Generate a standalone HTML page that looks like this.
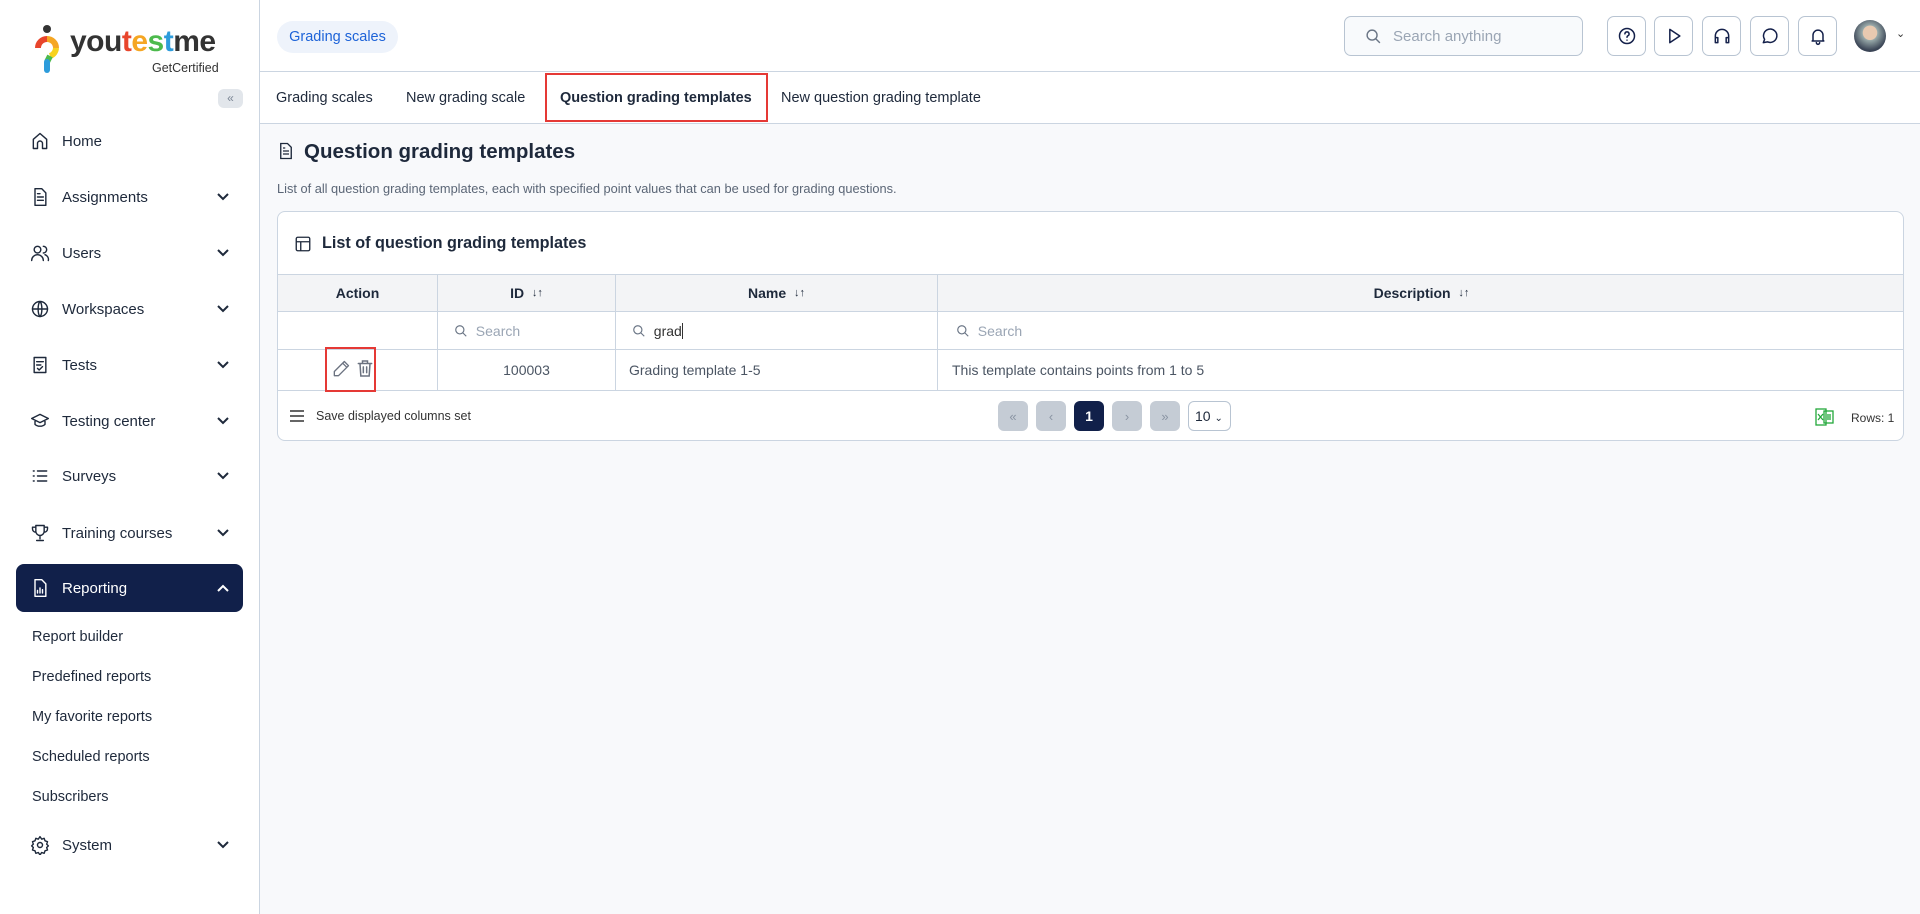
<!DOCTYPE html>
<html><head><meta charset="utf-8"><style>
*{box-sizing:border-box;margin:0;padding:0}
body{width:1920px;height:914px;overflow:hidden;font-family:"Liberation Sans",sans-serif;color:#1e293b;background:#f8f9fb;position:relative}
.abs{position:absolute}
#side{left:0;top:0;width:260px;height:914px;background:#fff;border-right:1px solid #cbd5e1}
.nav{position:absolute;left:30px;width:210px;height:24px;font-size:15px;font-weight:500;color:#1e293b;display:flex;align-items:center}
.nav svg.i{width:20px;height:20px;margin-right:12px;stroke:#1e293b;fill:none;stroke-width:1.7;stroke-linecap:round;stroke-linejoin:round}
.chev{position:absolute;right:10px;top:5px;width:14px;height:14px;stroke:#1e293b;fill:none;stroke-width:2}
.sub{position:absolute;left:32px;font-size:14.5px;font-weight:500;color:#1e293b}
#top{left:260px;top:0;width:1660px;height:72px;background:#fff;border-bottom:1px solid #cbd5e1}
#tabs{left:260px;top:72px;width:1660px;height:52px;background:#fff;border-bottom:1px solid #cbd5e1}
.tab{position:absolute;top:18px;font-size:14.5px;color:#1e293b}
.ib{position:absolute;top:16px;width:39px;height:40px;border:1px solid #b8c4d2;border-radius:7px;display:flex;align-items:center;justify-content:center;background:#fff}
.ib svg{width:20px;height:20px;stroke:#14204a;fill:none;stroke-width:1.8;stroke-linecap:round;stroke-linejoin:round}
#card{left:277px;top:211px;width:1627px;height:230px;background:#fff;border:1px solid #cbd5e1;border-radius:8px;overflow:hidden}
.row{position:absolute;left:0;width:1627px;border-top:1px solid #cbd5e1}
.cell{position:absolute;top:0;height:100%;border-right:1px solid #cbd5e1;display:flex;align-items:center;font-size:14px}
.pb{position:absolute;top:189px;width:30px;height:30px;border-radius:6px;background:#c5ccd5;color:#8a94a3;font-size:13px;display:flex;align-items:center;justify-content:center}
</style></head><body>
<div id="side" class="abs">
  <svg class="abs" style="left:32px;top:24px" width="30" height="50" viewBox="0 0 30 50">
    <circle cx="15" cy="5" r="4" fill="#333"/>
    <path d="M6 24a9 9 0 0 1 9-9" stroke="#e8452c" stroke-width="6" fill="none"/>
    <path d="M15 15a9 9 0 0 1 9 9" stroke="#f5a623" stroke-width="6" fill="none"/>
    <path d="M24 24a9 9 0 0 1-6 8" stroke="#f7d21d" stroke-width="6" fill="none"/>
    <path d="M18 32l-3 6" stroke="#4cba4c" stroke-width="6" fill="none"/>
    <path d="M15 38v8" stroke="#2d9cdb" stroke-width="6" stroke-linecap="round"/>
  </svg>
  <div class="abs" style="left:70px;top:27px;font-size:30px;font-weight:bold;letter-spacing:-0.5px;color:#333;line-height:1">you<span style="color:#e8452c">t</span><span style="color:#f5a623">e</span><span style="color:#4cba4c">s</span><span style="color:#2d9cdb">t</span>me</div>
  <div class="abs" style="left:152px;top:61px;font-size:12.5px;color:#333">GetCertified</div>
  <div class="abs" style="left:218px;top:89px;width:25px;height:19px;border-radius:6px;background:#e2e6eb;color:#7a8594;font-size:12px;text-align:center;line-height:19px">«</div>
  <div class="nav" style="top:129px"><svg class="i" viewBox="0 0 24 24"><path d="M4 21V10l8-7 8 7v11h-5v-6a3 3 0 0 0-6 0v6z"/></svg>Home</div>
  <div class="nav" style="top:185px"><svg class="i" viewBox="0 0 24 24"><path d="M6 2h8l5 5v15H6z M9 12h7M9 16h7M9 8h3"/></svg>Assignments<svg class="chev" viewBox="0 0 14 14"><path d="M2 4l5 5 5-5"/></svg></div>
  <div class="nav" style="top:241px"><svg class="i" viewBox="0 0 24 24"><circle cx="9" cy="8" r="4"/><path d="M2 21a7 7 0 0 1 14 0M16 4a4 4 0 0 1 0 8M18 14a6 6 0 0 1 4 7"/></svg>Users<svg class="chev" viewBox="0 0 14 14"><path d="M2 4l5 5 5-5"/></svg></div>
  <div class="nav" style="top:297px"><svg class="i" viewBox="0 0 24 24"><circle cx="12" cy="12" r="9"/><path d="M3 12h18M12 3c3 3 3 15 0 18M12 3c-3 3-3 15 0 18"/></svg>Workspaces<svg class="chev" viewBox="0 0 14 14"><path d="M2 4l5 5 5-5"/></svg></div>
  <div class="nav" style="top:353px"><svg class="i" viewBox="0 0 24 24"><path d="M5 3h14v18H5z M8 8h8M8 12h5M9 16l2 2 4-4"/></svg>Tests<svg class="chev" viewBox="0 0 14 14"><path d="M2 4l5 5 5-5"/></svg></div>
  <div class="nav" style="top:409px"><svg class="i" viewBox="0 0 24 24"><path d="M2 9l10-5 10 5-10 5z M6 11v5c3 3 9 3 12 0v-5"/></svg>Testing center<svg class="chev" viewBox="0 0 14 14"><path d="M2 4l5 5 5-5"/></svg></div>
  <div class="nav" style="top:464px"><svg class="i" viewBox="0 0 24 24"><path d="M4 6h1M4 12h1M4 18h1M9 6h11M9 12h11M9 18h11"/></svg>Surveys<svg class="chev" viewBox="0 0 14 14"><path d="M2 4l5 5 5-5"/></svg></div>
  <div class="nav" style="top:521px"><svg class="i" viewBox="0 0 24 24"><path d="M7 3h10v7a5 5 0 0 1-10 0z M7 5H3v2a4 4 0 0 0 4 4M17 5h4v2a4 4 0 0 1-4 4M12 15v4M8 21h8"/></svg>Training courses<svg class="chev" viewBox="0 0 14 14"><path d="M2 4l5 5 5-5"/></svg></div>
  <div class="abs" style="left:16px;top:564px;width:227px;height:48px;border-radius:8px;background:#11204a"></div>
  <div class="nav" style="top:576px;color:#fff"><svg class="i" viewBox="0 0 24 24" style="stroke:#fff"><path d="M6 2h8l5 5v15H6z M9 18v-3M12 18v-6M15 18v-4"/></svg>Reporting<svg class="chev" viewBox="0 0 14 14" style="stroke:#fff"><path d="M2 10l5-5 5 5"/></svg></div>
  <div class="sub" style="top:629px">Report builder</div>
  <div class="sub" style="top:669px">Predefined reports</div>
  <div class="sub" style="top:709px">My favorite reports</div>
  <div class="sub" style="top:749px">Scheduled reports</div>
  <div class="sub" style="top:789px">Subscribers</div>
  <div class="nav" style="top:833px"><svg class="i" viewBox="0 0 24 24"><circle cx="12" cy="12" r="3"/><path d="M12 2l2 3 3-1 1 3 3 1-1 3 2 2-2 2 1 3-3 1-1 3-3-1-2 3-2-3-3 1-1-3-3-1 1-3-2-2 2-2-1-3 3-1 1-3 3 1z"/></svg>System<svg class="chev" viewBox="0 0 14 14"><path d="M2 4l5 5 5-5"/></svg></div>
</div>

<div id="top" class="abs">
  <div class="abs" style="left:17px;top:21px;width:121px;height:32px;border-radius:16px;background:#eef3fb;color:#1d63d8;font-size:14.5px;line-height:32px;text-align:center">Grading scales</div>
  <div class="abs" style="left:1084px;top:16px;width:239px;height:40px;border:1px solid #b8c4d2;border-radius:7px;background:#f8fafc">
    <svg class="abs" style="left:20px;top:11px" width="17" height="17" viewBox="0 0 24 24" fill="none" stroke="#6b7686" stroke-width="2"><circle cx="10" cy="10" r="7"/><path d="M15 15l6 6"/></svg>
    <div class="abs" style="left:48px;top:11px;font-size:15px;color:#9aa5b4">Search anything</div>
  </div>
  <div class="ib" style="left:1347px"><svg viewBox="0 0 24 24"><circle cx="12" cy="12" r="9"/><path d="M9.5 9.5a2.5 2.5 0 1 1 3.5 2.3c-.7.4-1 .9-1 1.7M12 17h.01"/></svg></div>
  <div class="ib" style="left:1394px"><svg viewBox="0 0 24 24"><path d="M7 4l12 8-12 8z"/></svg></div>
  <div class="ib" style="left:1442px"><svg viewBox="0 0 24 24"><path d="M4 18v-6a8 8 0 0 1 16 0v6M4 14h3v6H4zM17 14h3v6h-3z"/></svg></div>
  <div class="ib" style="left:1490px"><svg viewBox="0 0 24 24"><path d="M4 20l1.5-4A8 8 0 1 1 9 19z"/></svg></div>
  <div class="ib" style="left:1538px"><svg viewBox="0 0 24 24"><path d="M6 17V11a6 6 0 0 1 12 0v6l1 1H5zM10 20a2 2 0 0 0 4 0"/></svg></div>
  <div class="abs" style="left:1594px;top:20px;width:32px;height:32px;border-radius:50%;background:radial-gradient(circle at 50% 40%,#e8c9b0 0 28%,#9aa 30%,#3b4556 70%)"></div>
  <div class="abs" style="left:1636px;top:27px;font-size:11px;color:#333">⌄</div>
</div>

<div id="tabs" class="abs">
  <div class="tab" style="left:16px">Grading scales</div>
  <div class="tab" style="left:146px">New grading scale</div>
  <div class="abs" style="left:285px;top:1px;width:223px;height:49px;border:2px solid #e53935"></div>
  <div class="tab" style="left:300px;font-weight:bold">Question grading templates</div>
  <div class="tab" style="left:521px">New question grading template</div>
</div>

<svg class="abs" style="left:277px;top:141px" width="18" height="20" viewBox="0 0 24 24" fill="none" stroke="#1e293b" stroke-width="1.8"><path d="M5 2h9l5 5v15H5z M8 12h8M8 16h8M8 8h3"/></svg>
<div class="abs" style="left:304px;top:140px;font-size:20.5px;font-weight:bold;color:#1e293b">Question grading templates</div>
<div class="abs" style="left:277px;top:181px;font-size:12.8px;color:#5b6676">List of all question grading templates, each with specified point values that can be used for grading questions.</div>

<div id="card" class="abs">
  <svg class="abs" style="left:16px;top:23px" width="18" height="18" viewBox="0 0 24 24" fill="none" stroke="#1e293b" stroke-width="1.8"><rect x="3" y="3" width="18" height="18" rx="2"/><path d="M3 9h18M9 9v12"/></svg>
  <div class="abs" style="left:44px;top:22px;font-size:16.2px;font-weight:bold">List of question grading templates</div>
  <div class="row" style="top:62px;height:37px;background:#f3f4f6">
    <div class="cell" style="left:0;width:160px;justify-content:center;font-weight:bold">Action</div>
    <div class="cell" style="left:160px;width:178px;justify-content:center;font-weight:bold">ID&nbsp;&nbsp;<span style="font-size:11px;font-weight:normal">↓↑</span></div>
    <div class="cell" style="left:338px;width:322px;justify-content:center;font-weight:bold">Name&nbsp;&nbsp;<span style="font-size:11px;font-weight:normal">↓↑</span></div>
    <div class="cell" style="left:660px;width:967px;justify-content:center;font-weight:bold;border-right:0">Description&nbsp;&nbsp;<span style="font-size:11px;font-weight:normal">↓↑</span></div>
  </div>
  <div class="row" style="top:99px;height:38px">
    <div class="cell" style="left:0;width:160px"></div>
    <div class="cell" style="left:160px;width:178px;padding-left:16px;color:#9aa5b4"><svg width="14" height="14" viewBox="0 0 24 24" fill="none" stroke="#6b7686" stroke-width="2"><circle cx="10" cy="10" r="7"/><path d="M15 15l6 6"/></svg>&nbsp;&nbsp;Search</div>
    <div class="cell" style="left:338px;width:322px;padding-left:16px;color:#333"><svg width="14" height="14" viewBox="0 0 24 24" fill="none" stroke="#6b7686" stroke-width="2"><circle cx="10" cy="10" r="7"/><path d="M15 15l6 6"/></svg>&nbsp;&nbsp;grad<span style="border-left:1px solid #333;height:16px"></span></div>
    <div class="cell" style="left:660px;width:967px;padding-left:18px;color:#9aa5b4;border-right:0"><svg width="14" height="14" viewBox="0 0 24 24" fill="none" stroke="#6b7686" stroke-width="2"><circle cx="10" cy="10" r="7"/><path d="M15 15l6 6"/></svg>&nbsp;&nbsp;Search</div>
  </div>
  <div class="row" style="top:137px;height:42px;border-bottom:1px solid #cbd5e1">
    <div class="cell" style="left:0;width:160px"></div>
    <div class="cell" style="left:160px;width:178px;justify-content:center;color:#4b5563">100003</div>
    <div class="cell" style="left:338px;width:322px;padding-left:13px;color:#4b5563">Grading template 1-5</div>
    <div class="cell" style="left:660px;width:967px;padding-left:14px;color:#4b5563;border-right:0">This template contains points from 1 to 5</div>
  </div>
  <div class="abs" style="left:47px;top:135px;width:51px;height:45px;border:2px solid #e53935"></div>
  <svg class="abs" style="left:53px;top:147px" width="20" height="20" viewBox="0 0 24 24" fill="none" stroke="#6b7280" stroke-width="1.6" stroke-linejoin="round"><path d="M16 3l5 5L9 20H4v-5z M14 5l5 5"/></svg>
  <svg class="abs" style="left:77px;top:146px" width="20" height="21" viewBox="0 0 24 24" fill="none" stroke="#6b7280" stroke-width="1.8" stroke-linecap="round"><path d="M4 6h16M9 6V3h6v3M6 6l1 15h10l1-15M10 10v7M14 10v7"/></svg>
  <svg class="abs" style="left:11px;top:197px" width="16" height="14" viewBox="0 0 16 14" stroke="#333" stroke-width="1.6"><path d="M1 2h14M1 7h14M1 12h14"/></svg>
  <div class="abs" style="left:38px;top:197px;font-size:12.5px;color:#333">Save displayed columns set</div>
  <div class="pb" style="left:720px">«</div>
  <div class="pb" style="left:758px">‹</div>
  <div class="pb" style="left:796px;background:#11204a;color:#fff;font-weight:bold;font-size:14px">1</div>
  <div class="pb" style="left:834px">›</div>
  <div class="pb" style="left:872px">»</div>
  <div class="abs" style="left:910px;top:189px;width:43px;height:30px;border:1px solid #b8c4d2;border-radius:6px;font-size:14px;line-height:28px;padding-left:6px">10 <span style="font-size:10px">⌄</span></div>
  <svg class="abs" style="left:1537px;top:195px" width="20" height="20" viewBox="0 0 20 20" fill="none" stroke="#22a83a" stroke-width="1.3"><rect x="1" y="2" width="10" height="16"/><rect x="9" y="4" width="9" height="12"/><path d="M3 7l5 6M8 7l-5 6M13 7v6M15 7v6"/></svg>
  <div class="abs" style="left:1573px;top:199px;font-size:12px;color:#333">Rows: 1</div>
</div>
</body></html>
